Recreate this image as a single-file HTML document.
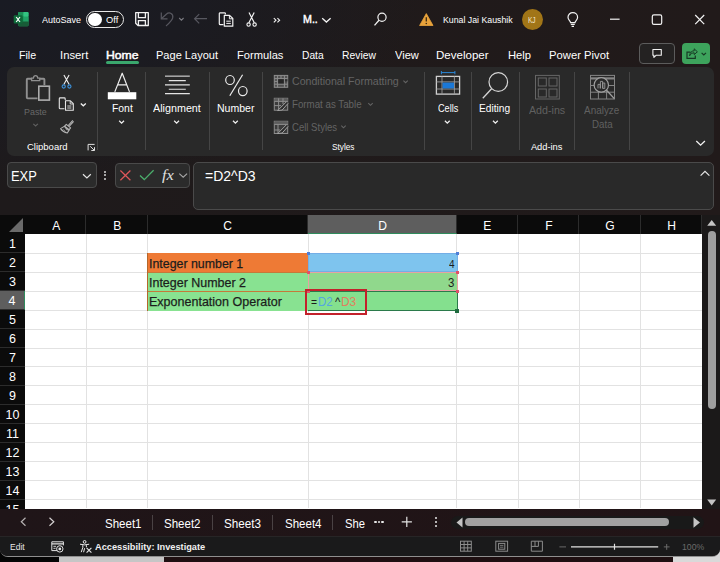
<!DOCTYPE html>
<html><head><meta charset="utf-8"><title>Excel</title>
<style>
*{box-sizing:border-box;margin:0;padding:0}
html,body{width:720px;height:562px;overflow:hidden;background:#141213}
body{position:relative;font-family:"Liberation Sans",sans-serif;color:#fff;font-size:12px}
#win{position:absolute;left:0;top:0;width:720px;height:557px;border-bottom:1.2px solid #8f8f8f;background:radial-gradient(ellipse 420px 190px at 0 0,#191b23 0%,#1b1b21 45%,rgba(31,26,26,0) 100%),linear-gradient(90deg,#1e1a1b 0%,#211a1a 100%);border-radius:0 0 8px 8px;overflow:hidden}
.t{position:absolute;white-space:nowrap;line-height:1;transform-origin:0 50%}
.b{position:absolute}
svg{position:absolute;overflow:visible}
#ribbon{left:7px;top:67px;width:706.5px;height:88.5px;background:#292929;border-radius:7px}
.sep{position:absolute;width:1px;background:#454545;top:72px;height:78px}
.ch{position:absolute;top:215px;height:18.8px;color:#fff;font-size:13px;text-align:center;line-height:21.4px;border-right:1px solid #2c2c2c;padding-left:1.5px}.ch span{display:inline-block;transform:scaleX(.93)}
.rh{position:absolute;left:0;width:24.8px;height:18.95px;color:#fff;font-size:12.5px;text-align:center;line-height:21.6px;border-bottom:1px solid #2c2c2c}
.vl{position:absolute;top:233.8px;width:1px;height:274.7px;background:#e2e2e2}
.hl{position:absolute;left:25px;width:677px;height:1px;background:#e2e2e2}
</style></head><body>
<div class="b" style="left:0;top:548px;width:59px;height:14px;background:#050505"></div>
<div class="b" style="left:58.6px;top:548px;width:105.4px;height:14px;background:#c6c6c6"></div>
<div class="b" style="left:164px;top:548px;width:509px;height:14px;background:#1e0f11"></div>
<div class="b" style="left:673px;top:548px;width:47px;height:14px;background:#d9d9d9"></div>
<div id="win">
<div class="b" id="ribbon"></div>
<div class="sep" style="left:97.2px"></div>
<div class="sep" style="left:145.3px"></div>
<div class="sep" style="left:209.1px"></div>
<div class="sep" style="left:262.0px"></div>
<div class="sep" style="left:424.0px"></div>
<div class="sep" style="left:471.2px"></div>
<div class="sep" style="left:519.0px"></div>
<div class="sep" style="left:574.1px"></div>
<div class="sep" style="left:629.0px"></div>
<div class="b" style="left:106px;top:61.4px;width:33px;height:2.2px;background:#3aa76d;border-radius:2px"></div>
<div class="b" style="left:639px;top:43px;width:36px;height:21px;border:1px solid #5c5c5c;border-radius:4px;background:#242222"></div>
<div class="b" style="left:682px;top:43px;width:28px;height:21px;border-radius:4px;background:#3da35c"></div>
<div class="b" style="left:86px;top:10.5px;width:38.3px;height:17.8px;border:1.2px solid #e8e8e8;border-radius:9px;background:#18181b"></div>
<div class="b" style="left:88.3px;top:12.7px;width:13.4px;height:13.4px;border-radius:50%;background:#fff"></div>
<div class="b" style="left:521.5px;top:8.6px;width:21.2px;height:21.2px;border-radius:50%;background:#a17517"></div>
<div class="b" style="left:7px;top:162.4px;width:89.5px;height:25.5px;border:1px solid #4a4a4a;border-radius:4px;background:#2b2b2b"></div>
<div class="b" style="left:114.6px;top:162.6px;width:75px;height:25px;border:1px solid #4a4a4a;border-radius:4px;background:#2b2b2b"></div>
<div class="b" style="left:193.2px;top:161.6px;width:520.4px;height:48px;border:1px solid #4a4a4a;border-radius:5px;background:#292929"></div>
<div class="b" style="left:104.3px;top:170.9px;width:1.8px;height:1.8px;border-radius:50%;background:#d0d0d0"></div>
<div class="b" style="left:104.3px;top:174.4px;width:1.8px;height:1.8px;border-radius:50%;background:#d0d0d0"></div>
<div class="b" style="left:104.3px;top:177.9px;width:1.8px;height:1.8px;border-radius:50%;background:#d0d0d0"></div>
<div class="b" style="left:0;top:215px;width:702px;height:293.5px;background:#fff"></div>
<div class="b" style="left:0;top:215px;width:702px;height:18.8px;background:#0b0b0b"></div>
<div class="b" style="left:0;top:215px;width:24.8px;height:293.5px;background:#0b0b0b"></div>
<div class="ch" style="left:24.8px;width:61.60000000000001px;"><span>A</span></div>
<div class="ch" style="left:86.4px;width:61.19999999999999px;"><span>B</span></div>
<div class="ch" style="left:147.6px;width:160.4px;"><span>C</span></div>
<div class="ch" style="left:308px;width:148.8px;background:#5e5e5e;border-bottom:1.5px solid #2e8b5c;"><span>D</span></div>
<div class="ch" style="left:456.8px;width:61.19999999999999px;"><span>E</span></div>
<div class="ch" style="left:518px;width:61.299999999999955px;"><span>F</span></div>
<div class="ch" style="left:579.3px;width:61.40000000000009px;"><span>G</span></div>
<div class="ch" style="left:640.7px;width:61.299999999999955px;"><span>H</span></div>
<div class="vl" style="left:85.9px"></div>
<div class="vl" style="left:147.1px"></div>
<div class="vl" style="left:307.5px"></div>
<div class="vl" style="left:456.3px"></div>
<div class="vl" style="left:517.5px"></div>
<div class="vl" style="left:578.8px"></div>
<div class="vl" style="left:640.2px"></div>
<div class="rh" style="top:234.30px;">1</div>
<div class="rh" style="top:253.25px;">2</div>
<div class="hl" style="top:252.75px"></div>
<div class="rh" style="top:272.20px;">3</div>
<div class="hl" style="top:271.70px"></div>
<div class="rh" style="top:291.15px;background:#5e5e5e;border-right:1.5px solid #2e8b5c;">4</div>
<div class="hl" style="top:290.65px"></div>
<div class="rh" style="top:310.10px;">5</div>
<div class="hl" style="top:309.60px"></div>
<div class="rh" style="top:329.05px;">6</div>
<div class="hl" style="top:328.55px"></div>
<div class="rh" style="top:348.00px;">7</div>
<div class="hl" style="top:347.50px"></div>
<div class="rh" style="top:366.95px;">8</div>
<div class="hl" style="top:366.45px"></div>
<div class="rh" style="top:385.90px;">9</div>
<div class="hl" style="top:385.40px"></div>
<div class="rh" style="top:404.85px;">10</div>
<div class="hl" style="top:404.35px"></div>
<div class="rh" style="top:423.80px;">11</div>
<div class="hl" style="top:423.30px"></div>
<div class="rh" style="top:442.75px;">12</div>
<div class="hl" style="top:442.25px"></div>
<div class="rh" style="top:461.70px;">13</div>
<div class="hl" style="top:461.20px"></div>
<div class="rh" style="top:480.65px;">14</div>
<div class="hl" style="top:480.15px"></div>
<div class="rh" style="top:499.60px;">15</div>
<div class="hl" style="top:499.10px"></div>
<svg style="left:0;top:215px" width="25" height="19"><path d="M23 3V17H9Z" fill="#6a6a6a"/></svg>
<div class="b" style="left:147px;top:252.55px;width:161px;height:19.65px;background:#ee7a35"></div>
<div class="b" style="left:147px;top:272.20px;width:161px;height:38.50px;background:#88e291"></div>
<div class="b" style="left:147px;top:271.60px;width:161px;height:1px;background:#c47a3a"></div>
<div class="b" style="left:147px;top:290.55px;width:161px;height:1px;background:#c47a3a"></div>
<div class="b" style="left:146.8px;top:252.55px;width:1.2px;height:58.15px;background:#b5672b"></div>
<div class="b" style="left:308px;top:253.25px;width:149.5px;height:18.95px;background:#7ec4ee;border:1px solid #74aee6"></div>
<div class="b" style="left:308px;top:272.20px;width:149.5px;height:18.95px;background:#90d88c;border:1px solid #e7a3a3"></div>
<div class="b" style="left:308px;top:291.45px;width:149.5px;height:19.65px;background:#84e08e;border-top:1.5px solid #2b7a4b;border-bottom:1.8px solid #2b7a4b;border-right:1px solid #2b7a4b"></div>
<div class="b" style="left:306.5px;top:251.75px;width:3px;height:3px;background:#4f7fd6"></div>
<div class="b" style="left:455.5px;top:251.75px;width:3px;height:3px;background:#4f7fd6"></div>
<div class="b" style="left:306.5px;top:270.70px;width:3px;height:3px;background:#e0506a"></div>
<div class="b" style="left:455.5px;top:270.70px;width:3px;height:3px;background:#e0506a"></div>
<div class="b" style="left:455.5px;top:289.65px;width:3px;height:3px;background:#e0506a"></div>
<div class="b" style="left:306.5px;top:289.65px;width:3px;height:3px;background:#e0506a"></div>
<div class="b" style="left:455px;top:308.60px;width:4px;height:4px;background:#1f6b3f"></div>
<div class="b" style="left:305.4px;top:288.6px;width:61.8px;height:26.2px;border:2.9px solid #c3212b"></div>
<div class="b" style="left:702px;top:215px;width:18px;height:294px;background:#1b1919"></div>
<div class="b" style="left:708px;top:230.5px;width:7.5px;height:178.5px;border-radius:4px;background:#9e9e9e"></div>
<svg style="left:702px;top:215px" width="18" height="294"><path d="M5.2 10.7L9.7 5L14.2 10.7Z" fill="#c4c4c4"/><path d="M5.2 284.5L9.7 290.5L14.2 284.5Z" fill="#c4c4c4"/></svg>
<div class="b" style="left:0;top:508.5px;width:720px;height:29px;background:linear-gradient(90deg,#1f1518,#211416)"></div>
<div class="b" style="left:152.0px;top:515px;width:1px;height:15px;background:#4a4244"></div>
<div class="b" style="left:212.0px;top:515px;width:1px;height:15px;background:#4a4244"></div>
<div class="b" style="left:272.0px;top:515px;width:1px;height:15px;background:#4a4244"></div>
<div class="b" style="left:332.0px;top:515px;width:1px;height:15px;background:#4a4244"></div>
<div class="b" style="left:451px;top:515.7px;width:253px;height:13.6px;border-radius:7px;background:#191919"></div>
<div class="b" style="left:465px;top:518.3px;width:204px;height:7.6px;border-radius:4px;background:#a1a1a1"></div>
<svg style="left:451px;top:515px" width="253" height="15"><path d="M11.5 2.5L5.5 7.5L11.5 12.5Z" fill="#c4c4c4"/><path d="M242.5 2.2L249 7.5L242.5 12.8Z" fill="#c4c4c4"/></svg>
<div class="b" style="left:374.3px;top:520.8px;width:2.4px;height:2.4px;border-radius:50%;background:#e8e8e8"></div>
<div class="b" style="left:377.8px;top:520.8px;width:2.4px;height:2.4px;border-radius:50%;background:#e8e8e8"></div>
<div class="b" style="left:381.3px;top:520.8px;width:2.4px;height:2.4px;border-radius:50%;background:#e8e8e8"></div>
<svg style="left:401px;top:516px" width="12" height="12"><path d="M5.8 0.8V11M0.7 5.9H10.9" stroke="#e4e4e4" stroke-width="1.2" fill="none"/></svg>
<div class="b" style="left:434.6px;top:517.2px;width:2px;height:2px;border-radius:50%;background:#e8e8e8"></div>
<div class="b" style="left:434.6px;top:521px;width:2px;height:2px;border-radius:50%;background:#e8e8e8"></div>
<div class="b" style="left:434.6px;top:524.8px;width:2px;height:2px;border-radius:50%;background:#e8e8e8"></div>
<svg style="left:18px;top:515px" width="40" height="14"><path d="M7.5 2.8L3.3 6.8L7.5 10.8" stroke="#b4b0b0" stroke-width="1.2" fill="none"/><path d="M31.5 2.8L35.8 6.8L31.5 10.8" stroke="#d4d0d0" stroke-width="1.2" fill="none"/></svg>
<div class="b" style="left:0;top:536.2px;width:720px;height:22px;background:#1a1a1b;border-top:1.3px solid #272526"></div><!-- excel logo -->
<svg style="left:0;top:0" width="40" height="38" viewBox="0 0 40 38">
<rect x="18.2" y="12" width="10.3" height="14.2" rx="1.2" fill="#21a366"/>
<rect x="18.2" y="12" width="5.2" height="4.8" fill="#1c8f57"/>
<rect x="23.4" y="12" width="5.1" height="4.8" rx="1" fill="#33c481"/>
<rect x="18.2" y="16.8" width="5.2" height="4.7" fill="#107c41"/>
<rect x="23.4" y="16.8" width="5.1" height="4.7" fill="#21a366"/>
<rect x="18.2" y="21.5" width="10.3" height="4.7" rx="1" fill="#185c37"/>
<rect x="13.7" y="15.2" width="8.8" height="8.4" rx="1" fill="#0f6b3a"/>
<path d="M16.2 17L20 22M20 17L16.2 22" stroke="#fff" stroke-width="1.2" fill="none"/>
</svg>
<!-- save -->
<svg style="left:130px;top:8px" width="24" height="22" viewBox="130 8 24 22">
<path d="M135.7 12.7H148.3V25.5H138L135.7 23.2Z" fill="none" stroke="#f2f2f2" stroke-width="1.3" stroke-linejoin="round"/>
<path d="M138.4 12.7V17.6H145.4V12.7M138.4 25.5V20.6H145.4V25.5" fill="none" stroke="#f2f2f2" stroke-width="1.3"/>
</svg>
<!-- undo, chevron, back arrow (dim) -->
<svg style="left:156px;top:8px" width="56" height="22" viewBox="156 8 56 22">
<path d="M161.3 12.6V18.8H167.5" fill="none" stroke="#585860" stroke-width="1.2"/>
<path d="M161.6 18.5L166.3 14.2C169.5 11.6 173.6 13.6 172.7 17.8C172.2 20.3 170.3 22 166 26" fill="none" stroke="#585860" stroke-width="1.2"/>
<path d="M179.2 18L181.4 20.2L183.6 18" fill="none" stroke="#7a7a80" stroke-width="1.1"/>
<path d="M207 18.7H194.6M199.2 14.1L194.6 18.7L199.2 23.4" fill="none" stroke="#585860" stroke-width="1.2"/>
</svg>
<!-- copy -->
<svg style="left:215px;top:8px" width="24" height="22" viewBox="215 8 24 22">
<path d="M223.5 24.6H220.2Q219.3 24.6 219.3 23.7V13.6Q219.3 12.8 220.2 12.8H224.6Q225.4 12.8 225.4 13.6V14.6" fill="none" stroke="#f2f2f2" stroke-width="1.2"/>
<path d="M224.3 15.3H229.6L232.8 18.5V26.2H224.3Z" fill="none" stroke="#f2f2f2" stroke-width="1.2" stroke-linejoin="round"/>
<path d="M229.4 15.5V18.8H232.6" fill="none" stroke="#f2f2f2" stroke-width="1"/>
<path d="M226.3 21.2H230.8M226.3 23.4H230.8" fill="none" stroke="#f2f2f2" stroke-width="1"/>
</svg>
<!-- scissors -->
<svg style="left:243px;top:8px" width="18" height="22" viewBox="243 8 18 22">
<path d="M249 12.4L254.3 22.8M254.2 12.4L248.9 22.8" fill="none" stroke="#f2f2f2" stroke-width="1.2"/>
<circle cx="248.6" cy="24.6" r="1.7" fill="none" stroke="#f2f2f2" stroke-width="1.1"/>
<circle cx="254.6" cy="24.6" r="1.7" fill="none" stroke="#f2f2f2" stroke-width="1.1"/>
</svg>
<!-- >> -->
<svg style="left:270px;top:14px" width="14" height="12" viewBox="270 14 14 12">
<path d="M273.8 18.1L276 20.2L273.8 22.3M277.4 18.1L279.6 20.2L277.4 22.3" fill="none" stroke="#f2f2f2" stroke-width="1.1"/>
</svg>
<!-- title chevron -->
<svg style="left:320px;top:14px" width="14" height="12" viewBox="320 14 14 12">
<path d="M322.2 18.2L326.4 22L330.6 18.2" fill="none" stroke="#f2f2f2" stroke-width="1.3"/>
</svg>
<!-- search -->
<svg style="left:370px;top:8px" width="20" height="22" viewBox="370 8 20 22">
<circle cx="382" cy="17.2" r="4.1" fill="none" stroke="#f2f2f2" stroke-width="1.2"/>
<path d="M379 20.3L374.5 25.4" fill="none" stroke="#f2f2f2" stroke-width="1.3"/>
</svg>
<!-- warning -->
<svg style="left:416px;top:10px" width="20" height="18" viewBox="416 10 20 18">
<path d="M426.3 13.6L433 25.5H419.6Z" fill="#e9a33b" stroke="#e9a33b" stroke-width="0.8" stroke-linejoin="round"/>
<path d="M426.3 17.3V21.6" stroke="#3a2a10" stroke-width="1.3"/>
<circle cx="426.3" cy="23.5" r="0.8" fill="#3a2a10"/>
</svg>
<!-- lightbulb -->
<svg style="left:563px;top:8px" width="20" height="22" viewBox="563 8 20 22">
<path d="M570.6 22.6C570.4 20.8 568 20 568 17.3C568 14.6 570.1 12.7 572.8 12.7C575.5 12.7 577.6 14.6 577.6 17.3C577.6 20 575.2 20.8 575 22.6Z" fill="none" stroke="#f2f2f2" stroke-width="1.2"/>
<path d="M570.8 24.4H574.8M571.6 26.3H574" fill="none" stroke="#f2f2f2" stroke-width="1.2"/>
</svg>
<!-- window controls -->
<svg style="left:600px;top:8px" width="115" height="22" viewBox="600 8 115 22">
<path d="M610 19.2H619.6" stroke="#f2f2f2" stroke-width="1.2"/>
<rect x="652.3" y="14.9" width="9.4" height="9.4" rx="1.6" fill="none" stroke="#f2f2f2" stroke-width="1.2"/>
<path d="M695.2 15L704.2 24.2M704.2 15L695.2 24.2" stroke="#f2f2f2" stroke-width="1.2"/>
</svg>
<!-- comment icon -->
<svg style="left:648px;top:45px" width="18" height="16" viewBox="648 45 18 16">
<path d="M652.9 49.5H661.3V55.3H656L653.9 57.4V55.3H652.9Z" fill="none" stroke="#f2f2f2" stroke-width="1.1" stroke-linejoin="round"/>
</svg>
<!-- share icon -->
<svg style="left:683px;top:45px" width="28" height="18" viewBox="683 45 28 18">
<path d="M690.5 52.2H687V58.3H695.3V55.6" fill="none" stroke="#173a24" stroke-width="1.2"/>
<path d="M689.6 55.8C689.8 52.6 691.8 50.8 694.2 50.8V48.8L697.4 51.8L694.2 54.6V52.8C692.4 52.8 690.8 53.6 689.6 55.8Z" fill="none" stroke="#173a24" stroke-width="1" stroke-linejoin="round"/>
<path d="M701.6 52.9L703.8 55L706 52.9" fill="none" stroke="#173a24" stroke-width="1.2"/>
</svg>
<!-- ribbon icons: one big svg in page coords -->
<svg style="left:0;top:60px" width="720" height="100" viewBox="0 60 720 100">
<!-- paste -->
<g fill="none" stroke="#909090" stroke-width="1.9">
<path d="M31.5 78.8H27.6Q26.8 78.8 26.8 79.6V97.6Q26.8 98.4 27.6 98.4H37.5"/>
<path d="M39.8 78.8H43.6Q44.4 78.8 44.4 79.6V85"/>
<path d="M31.6 80.6V78.2H33.4Q33.6 75.6 35.6 75.6Q37.6 75.6 37.8 78.2H39.7V80.6Z" stroke-width="1.3"/>
</g>
<rect x="38.8" y="86.2" width="10.6" height="13.9" fill="#2a2a2a" stroke="#adadad" stroke-width="1.6"/>
<path d="M33.3 123.8L35.6 126L37.9 123.8" fill="none" stroke="#606060" stroke-width="1.1"/>
<!-- cut -->
<path d="M63.9 75L69.2 84.6M69.1 75L63.8 84.6" fill="none" stroke="#efefef" stroke-width="1.1"/>
<circle cx="63.7" cy="86.5" r="1.6" fill="none" stroke="#3d92dc" stroke-width="1.1"/>
<circle cx="69.4" cy="86.5" r="1.6" fill="none" stroke="#3d92dc" stroke-width="1.1"/>
<!-- copy -->
<g fill="none" stroke="#e6e6e6" stroke-width="1.1">
<path d="M64.4 108.8H60.2Q59.3 108.8 59.3 107.9V98.8Q59.3 97.9 60.2 97.9H64.3Q65.2 97.9 65.2 98.8V100"/>
<path d="M65.5 100.8H70.4L73.3 103.7V110.3H65.5Z" stroke-linejoin="round"/>
<path d="M70.2 101V104H73.1" stroke-width="0.9"/>
<path d="M67.3 106H71.4M67.3 108H71.4" stroke-width="0.9"/>
</g>
<path d="M80.8 103.6L83.3 105.8L85.8 103.6" fill="none" stroke="#f2f2f2" stroke-width="1.3"/>
<!-- format painter -->
<g fill="none" stroke="#b4b4b4" stroke-width="1.1" stroke-linejoin="round">
<path d="M72.8 120.4L68.2 125.6"/>
<path d="M73.6 121.3L69.2 126.4"/>
<path d="M66.3 124.3L70.6 127.9L69 129.8L64.6 126.2Z"/>
<path d="M64.2 126.4L60.6 128.6Q63 132.2 67.3 133L69 130.2Z"/>
<path d="M63.3 129.6L65.4 131.6M65.4 128.4L67.2 130.4" stroke-width="0.8"/>
</g>
<!-- dialog launcher -->
<path d="M94.6 144.4H88.1V150.4" fill="none" stroke="#e0e0e0" stroke-width="1"/>
<path d="M90.2 146.3L94.3 150.3M94.5 147.2V150.5H91.3" fill="none" stroke="#e0e0e0" stroke-width="1"/>
<!-- font A -->
<path d="M114.8 91.9L122.2 73.2L129.5 91.9M117.7 84.9H126.8" fill="none" stroke="#f0f0f0" stroke-width="1.2" stroke-linejoin="round"/>
<rect x="107.8" y="92.2" width="28.5" height="7.1" fill="#fff"/>
<!-- alignment -->
<path d="M165 76.2H189.8" stroke="#a4a4a4" stroke-width="1.6"/>
<path d="M168.8 80.6H185.8M165 84.9H189.8M168.8 89.3H185.8M165 93.6H189.8" stroke="#e4e4e4" stroke-width="1.1"/>
<!-- percent -->
<g fill="none" stroke="#ececec" stroke-width="1.2">
<ellipse cx="230" cy="80" rx="4.3" ry="4.5"/>
<ellipse cx="242.8" cy="91.1" rx="4.3" ry="4.6"/>
<path d="M242.6 74.8L229.8 95.8"/>
</g>
<!-- chevrons under big buttons -->
<g fill="none" stroke="#f2f2f2" stroke-width="1.3">
<path d="M119.2 120.8L121.6 123.1L124 120.8"/>
<path d="M174.2 120.8L176.6 123.1L179 120.8"/>
<path d="M233 120.8L235.4 123.1L237.8 120.8"/>
<path d="M444.9 120.8L447.3 123.1L449.7 120.8"/>
<path d="M493 120.8L495.4 123.1L497.8 120.8"/>
</g>
<!-- styles icons (dim) -->
<g fill="none" stroke="#8e8e8e" stroke-width="1">
<rect x="274.3" y="75.4" width="13.4" height="11.9" fill="#505050"/>
<rect x="277.8" y="78.8" width="6.6" height="5.2" fill="#262626" stroke="none"/>
<rect x="284.4" y="78.8" width="3" height="2.6" fill="#303030" stroke="none"/>
<path d="M274.3 78.6H287.7M274.3 84.2H287.7M277.6 75.4V87.3M284.4 75.4V87.3M281 75.4V78.6M274.3 81.4H277.6"/>
<rect x="274.3" y="98.3" width="13.4" height="11.9" fill="#3c3c3c"/>
<rect x="274.3" y="98.3" width="13.4" height="3.2" fill="#5c5c5c" stroke="none"/>
<path d="M274.3 101.4H287.7M274.3 105.6H281M278.6 98.3V110.2M283 98.3V104"/>
<path d="M286.8 101.4L279 109.2L277.6 110.6L282.2 110L288.2 103.2" fill="#2a2a2a" stroke="#a4a4a4"/>
<rect x="274.3" y="121.3" width="13.4" height="12.2" fill="#3c3c3c"/>
<rect x="274.3" y="121.3" width="13.4" height="3.2" fill="#5c5c5c" stroke="none"/>
<path d="M274.3 124.4H287.7M274.3 130H280M278 124.4V133.5"/>
<path d="M286.8 124.4L279 132.2L277.6 133.6L282.2 133L288.2 126.2" fill="#2a2a2a" stroke="#a4a4a4"/>
</g>
<g fill="none" stroke="#646464" stroke-width="1.1">
<path d="M403.4 80.6L405.6 82.7L407.8 80.6"/>
<path d="M368.3 103.2L370.5 105.3L372.7 103.2"/>
<path d="M341.3 125.7L343.5 127.8L345.7 125.7"/>
</g>
<!-- cells -->
<path d="M441.4 72.6H454.9M441.4 71V74.3M454.9 71V74.3" fill="none" stroke="#2b88d8" stroke-width="1"/>
<rect x="436.4" y="76.4" width="23.2" height="17.7" fill="none" stroke="#cfcfcf" stroke-width="1.3"/>
<path d="M442 76.4V94.1M454.4 76.4V94.1M436.4 81.9H459.6M436.4 89H459.6" fill="none" stroke="#9c9c9c" stroke-width="0.9"/>
<rect x="442.5" y="82.6" width="11.5" height="5.8" fill="#1b78d6"/>
<!-- editing magnifier -->
<circle cx="498.3" cy="82" r="9.3" fill="none" stroke="#d6d6d6" stroke-width="1.2"/>
<path d="M491.6 88.8L482.8 98.3" fill="none" stroke="#d6d6d6" stroke-width="1.3"/>
<!-- add-ins (dim) -->
<g fill="none" stroke="#666" stroke-width="1">
<rect x="535.5" y="75.4" width="23.8" height="23.6"/>
<rect x="538.3" y="78" width="8" height="8"/>
<rect x="549" y="78" width="8" height="8"/>
<rect x="538.3" y="89" width="8" height="8"/>
<rect x="549" y="89" width="8" height="8"/>
</g>
<!-- analyze data (dim) -->
<g fill="none" stroke="#858585" stroke-width="1">
<rect x="590.5" y="75.4" width="24" height="23.6"/>
<path d="M590.5 78.4H614.5" stroke-width="2.2"/>
<path d="M590.5 85.5H614.5M590.5 92.2H614.5M598.4 78.4V99M606.6 78.4V99"/>
<circle cx="601.3" cy="84.9" r="7.2" fill="#2a2a2a" stroke="#a0a0a0" stroke-width="1.2"/>
<path d="M606.6 90.2L614.3 98.6" stroke="#a0a0a0" stroke-width="1.3"/>
<path d="M598 88.4V84.4H600.2V88.4M600.4 88.4V81.4H602.6V88.4M602.8 88.4V83H604.8V88.4Z" stroke="#9a9a9a" stroke-width="0.9"/>
</g>
<!-- collapse ribbon chevron -->
<path d="M696.3 141L700.6 145.2L704.9 141" fill="none" stroke="#f2f2f2" stroke-width="1.3"/>
</svg>
<!-- formula bar icons -->
<svg style="left:0;top:160px" width="720" height="52" viewBox="0 160 720 52">
<path d="M83 174.2L86.9 177.9L90.8 174.2" fill="none" stroke="#e6e6e6" stroke-width="1.2"/>
<path d="M120.4 170.5L130.4 180.3M130.4 170.5L120.4 180.3" fill="none" stroke="#e0575a" stroke-width="1.2"/>
<path d="M140 175.6L144.3 179.6L153.6 170.2" fill="none" stroke="#4cae6c" stroke-width="1.3"/>
<path d="M179.3 173.6L183.2 177.2L187.1 173.6" fill="none" stroke="#a8a8a8" stroke-width="1.1"/>
<path d="M700.6 175.6L705 171.4L709.4 175.6" fill="none" stroke="#e6e6e6" stroke-width="1.2"/>
</svg>
<!-- status bar icons -->
<svg style="left:0;top:536px" width="720" height="22" viewBox="0 536 720 22">
<g fill="none" stroke="#e4e4e4" stroke-width="1">
<path d="M57 550.6H51.8V541.8H63.4V545.4"/>
<path d="M51.8 543.9H63.4" stroke-width="1.3"/>
<path d="M53.4 546.3H56M53.4 548.3H55.6" stroke-width="0.9"/>
<circle cx="59.8" cy="548.9" r="3.2"/>
<circle cx="59.8" cy="548.9" r="1.4" fill="#e4e4e4" stroke="none"/>
</g>
<g fill="none" stroke="#ececec" stroke-width="1">
<circle cx="84.6" cy="541.9" r="1.4"/>
<path d="M80 544.2Q84.6 545.6 89.2 544.2"/>
<path d="M82.8 545.2V547.6L81.2 552.2M86.4 545.2V547.2"/>
<path d="M84.6 548.2L83.6 552.2"/>
<path d="M86.6 547.8L91.4 552.6M91.4 547.8L86.6 552.6" stroke-width="1.1"/>
</g>
<g fill="none" stroke="#8c8c8c" stroke-width="1">
<rect x="460.5" y="541.2" width="10.8" height="10"/>
<path d="M464.1 541.2V551.2M467.7 541.2V551.2M460.5 544.5H471.3M460.5 547.9H471.3"/>
<rect x="495.8" y="541.2" width="11.8" height="10"/>
<rect x="498.6" y="543.4" width="6.2" height="5.8"/>
<path d="M500 545.4H503.4M500 547.2H503.4" stroke-width="0.8"/>
<path d="M531.3 541.2H542.4V551.2H531.3Z"/>
<path d="M535 541.2V546.4M538.4 541.2V546.4M531.3 546.4H538.4" />
</g>
<path d="M559.4 546.9H566" stroke="#6a6a6a" stroke-width="1"/>
<path d="M571 546.9H658.2" stroke="#e2e2e2" stroke-width="1.1"/>
<path d="M614.5 543.8V549.8" stroke="#e2e2e2" stroke-width="1.2"/>
<path d="M663.8 546.9H669.6M666.7 544V549.8" stroke="#6a6a6a" stroke-width="1"/>
</svg>

<div class="t" style="left:41.90px;top:12px;line-height:15px;font-size:9.7px;color:#fff;transform:scaleX(0.930);">AutoSave</div>
<div class="t" style="left:105.50px;top:12px;line-height:15px;font-size:9.7px;color:#fff;transform:scaleX(0.958);">Off</div>
<div class="t" style="left:302.90px;top:12px;line-height:15px;font-size:10px;color:#fff;transform:scaleX(1.068);-webkit-text-stroke:0.4px #fff;">M..</div>
<div class="t" style="left:443.20px;top:12px;line-height:15px;font-size:9.7px;color:#fff;transform:scaleX(0.905);">Kunal Jai Kaushik</div>
<div class="t" style="left:528.40px;top:13px;line-height:14px;font-size:8.8px;color:#f3e6cc;transform:scaleX(0.740);">KJ</div>
<div class="t" style="left:19.40px;top:47px;line-height:16px;font-size:10.9px;color:#fff;transform:scaleX(0.978);">File</div>
<div class="t" style="left:59.56px;top:47px;line-height:16px;font-size:10.9px;color:#fff;transform:scaleX(1.038);">Insert</div>
<div class="t" style="left:106.00px;top:47px;line-height:16px;font-size:10.9px;color:#fff;transform:scaleX(1.121);-webkit-text-stroke:0.45px #fff;">Home</div>
<div class="t" style="left:156.00px;top:47px;line-height:16px;font-size:10.9px;color:#fff;transform:scaleX(1.014);">Page Layout</div>
<div class="t" style="left:237.00px;top:47px;line-height:16px;font-size:10.9px;color:#fff;transform:scaleX(1.023);">Formulas</div>
<div class="t" style="left:302.00px;top:47px;line-height:16px;font-size:10.9px;color:#fff;transform:scaleX(0.940);">Data</div>
<div class="t" style="left:342.00px;top:47px;line-height:16px;font-size:10.9px;color:#fff;transform:scaleX(0.949);">Review</div>
<div class="t" style="left:395.00px;top:47px;line-height:16px;font-size:10.9px;color:#fff;transform:scaleX(1.019);">View</div>
<div class="t" style="left:436.00px;top:47px;line-height:16px;font-size:10.9px;color:#fff;transform:scaleX(1.060);">Developer</div>
<div class="t" style="left:507.50px;top:47px;line-height:16px;font-size:10.9px;color:#fff;transform:scaleX(1.029);">Help</div>
<div class="t" style="left:549.00px;top:47px;line-height:16px;font-size:10.9px;color:#fff;transform:scaleX(1.033);">Power Pivot</div>
<div class="t" style="left:24.40px;top:104px;line-height:15px;font-size:9.9px;color:#686868;transform:scaleX(0.901);">Paste</div>
<div class="t" style="left:26.90px;top:140px;line-height:14px;font-size:9.3px;color:#fff;transform:scaleX(1.020);">Clipboard</div>
<div class="t" style="left:111.90px;top:101px;line-height:15px;font-size:10.3px;color:#fff;transform:scaleX(1.008);">Font</div>
<div class="t" style="left:153.00px;top:101px;line-height:15px;font-size:10.3px;color:#fff;transform:scaleX(1.045);">Alignment</div>
<div class="t" style="left:217.00px;top:101px;line-height:15px;font-size:10.3px;color:#fff;transform:scaleX(1.022);">Number</div>
<div class="t" style="left:292.00px;top:74px;line-height:15px;font-size:10.3px;color:#646464;transform:scaleX(1.030);">Conditional Formatting</div>
<div class="t" style="left:292.00px;top:97px;line-height:15px;font-size:10.3px;color:#646464;transform:scaleX(0.945);">Format as Table</div>
<div class="t" style="left:292.00px;top:120px;line-height:15px;font-size:10.3px;color:#646464;transform:scaleX(0.928);">Cell Styles</div>
<div class="t" style="left:331.80px;top:140px;line-height:14px;font-size:9.3px;color:#fff;transform:scaleX(0.888);">Styles</div>
<div class="t" style="left:437.80px;top:101px;line-height:15px;font-size:10.3px;color:#fff;transform:scaleX(0.888);">Cells</div>
<div class="t" style="left:479.40px;top:101px;line-height:15px;font-size:10.3px;color:#fff;transform:scaleX(0.989);">Editing</div>
<div class="t" style="left:529.20px;top:103px;line-height:15px;font-size:10.3px;color:#606060;transform:scaleX(1.036);">Add-ins</div>
<div class="t" style="left:530.90px;top:140px;line-height:14px;font-size:9.3px;color:#fff;">Add-ins</div>
<div class="t" style="left:584.40px;top:103px;line-height:15px;font-size:10.3px;color:#606060;transform:scaleX(0.965);">Analyze</div>
<div class="t" style="left:591.60px;top:117px;line-height:15px;font-size:10.3px;color:#606060;transform:scaleX(0.944);">Data</div>
<div class="t" style="left:10.88px;top:166px;line-height:20px;font-size:14px;color:#fff;transform:scaleX(0.922);">EXP</div>
<div class="t" style="left:205.00px;top:166px;line-height:20px;font-size:14px;color:#fff;">=D2^D3</div>
<div class="t" style="left:162.00px;top:165px;line-height:20px;font-size:14.5px;color:#e0e0e0;font-style:italic;font-family:'Liberation Serif',serif;transform:scaleX(1.133);">fx</div>
<div class="t" style="left:149.06px;top:254px;line-height:19px;font-size:13.2px;color:#1c1c1c;transform:scaleX(0.938);-webkit-text-stroke:0.25px #1c1c1c;">Integer number 1</div>
<div class="t" style="left:149.06px;top:273px;line-height:19px;font-size:13.2px;color:#1c1c1c;transform:scaleX(0.945);-webkit-text-stroke:0.25px #1c1c1c;">Integer Number 2</div>
<div class="t" style="left:149.05px;top:292px;line-height:19px;font-size:13.2px;color:#1c1c1c;transform:scaleX(0.949);-webkit-text-stroke:0.25px #1c1c1c;">Exponentation Operator</div>
<div class="t" style="left:448.80px;top:256px;line-height:16px;font-size:10.8px;color:#1c1c1c;transform:scaleX(0.933);">4</div>
<div class="t" style="left:448.00px;top:274px;line-height:18px;font-size:12.5px;color:#1c1c1c;transform:scaleX(0.914);">3</div>
<div class="t" style="left:311.20px;top:293px;line-height:18px;font-size:12.5px;color:#1c1c1c;transform:scaleX(0.829);">=</div>
<div class="t" style="left:317.78px;top:293px;line-height:18px;font-size:12.5px;color:#55a6e0;transform:scaleX(0.918);">D2</div>
<div class="t" style="left:334.50px;top:293px;line-height:18px;font-size:12.5px;color:#1c1c1c;transform:scaleX(0.917);">^</div>
<div class="t" style="left:341.05px;top:293px;line-height:18px;font-size:12.5px;color:#e07f5f;transform:scaleX(0.952);">D3</div>
<div class="t" style="left:105.00px;top:515px;line-height:18px;font-size:12.6px;color:#fff;transform:scaleX(0.915);">Sheet1</div>
<div class="t" style="left:164.00px;top:515px;line-height:18px;font-size:12.6px;color:#fff;transform:scaleX(0.915);">Sheet2</div>
<div class="t" style="left:223.50px;top:515px;line-height:18px;font-size:12.6px;color:#fff;transform:scaleX(0.927);">Sheet3</div>
<div class="t" style="left:284.50px;top:515px;line-height:18px;font-size:12.6px;color:#fff;transform:scaleX(0.915);">Sheet4</div>
<div class="t" style="left:345.00px;top:515px;line-height:18px;font-size:12.6px;color:#fff;transform:scaleX(0.893);">She</div>
<div class="t" style="left:10.10px;top:540px;line-height:14px;font-size:9.3px;color:#e6e6e6;transform:scaleX(0.913);">Edit</div>
<div class="t" style="left:95.00px;top:540px;line-height:14px;font-size:9.3px;color:#f0f0f0;font-weight:bold;transform:scaleX(0.992);">Accessibility: Investigate</div>
<div class="t" style="left:681.80px;top:540px;line-height:14px;font-size:9.3px;color:#6a6a6a;transform:scaleX(0.936);">100%</div>
</div>
</body></html>
